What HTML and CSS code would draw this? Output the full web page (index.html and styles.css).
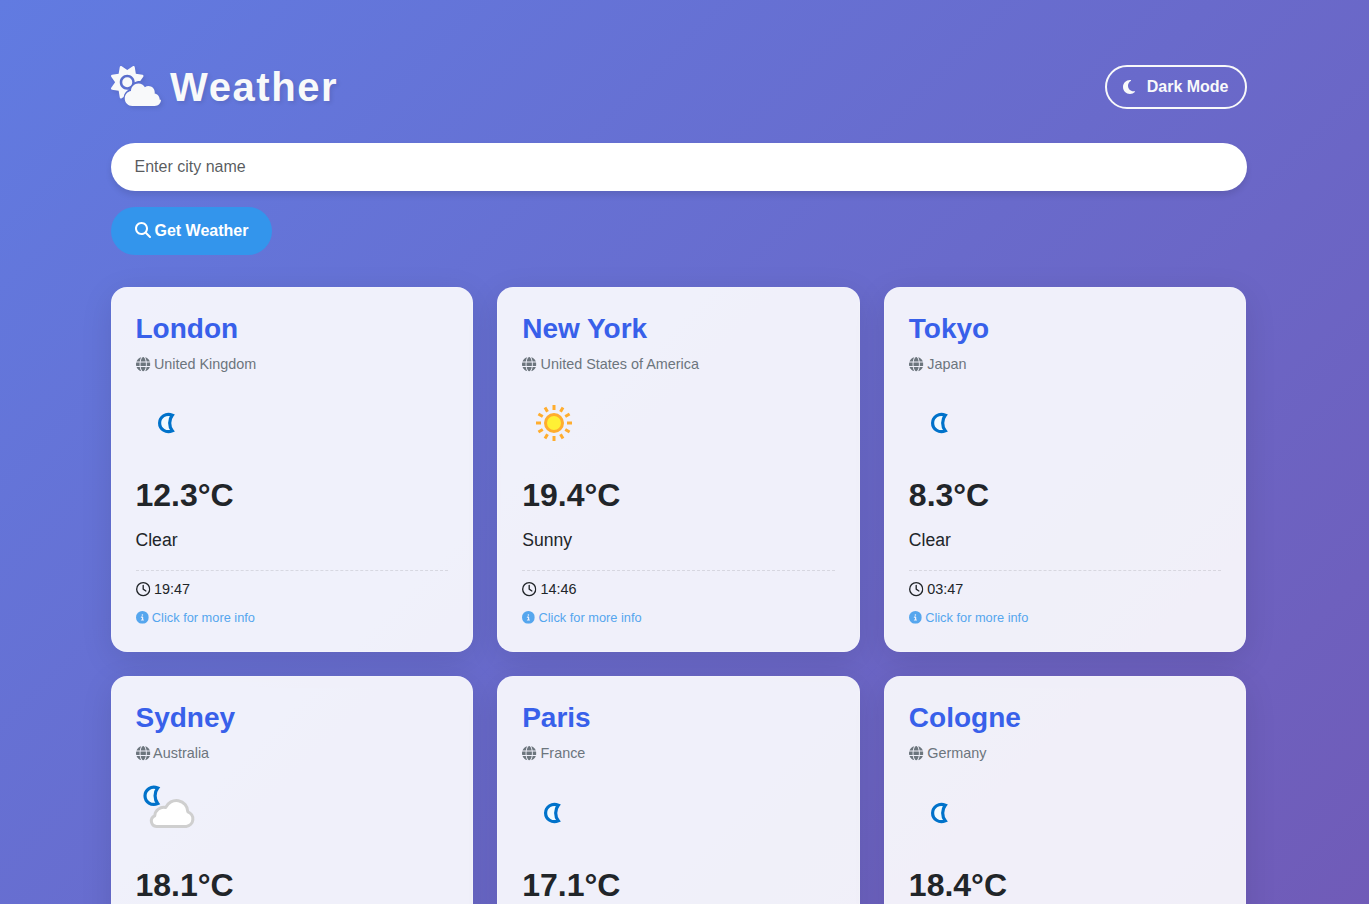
FILE: index.html
```html
<!DOCTYPE html>
<html lang="en">
<head>
<meta charset="utf-8">
<title>Weather</title>
<link rel="stylesheet" href="styles.css">
</head>
<body>
<svg class="sprite" aria-hidden="true">
  <symbol id="cloud-sun" viewBox="0 0 640 512"><path d="M294.2 1.2c5.1 2.1 8.7 6.7 9.6 12.1l14.1 84.7 84.7 14.1c5.4 .9 10 4.5 12.1 9.6s1.5 10.9-1.6 15.4l-38.5 55c-2.2-.1-4.4-.2-6.7-.2c-23.3 0-45.1 6.2-64 17.1l0-1.1c0-53-43-96-96-96s-96 43-96 96s43 96 96 96c8.1 0 15.9-1 23.4-2.9c-36.6 18.1-63.3 53.1-69.8 94.9l-24.4 17c-4.5 3.2-10.3 3.8-15.4 1.6s-8.7-6.7-9.6-12.1L98.1 317.9 13.4 303.8c-5.4-.9-10-4.5-12.1-9.6s-1.5-10.9 1.6-15.4L52.5 208 2.9 137.2c-3.2-4.5-3.8-10.3-1.6-15.4s6.7-8.7 12.1-9.6L98.1 98.1l14.1-84.7c.9-5.4 4.5-10 9.6-12.1s10.9-1.5 15.4 1.6L208 52.5 278.8 2.9c4.5-3.2 10.3-3.8 15.4-1.6zM144 208a64 64 0 1 1 128 0 64 64 0 1 1 -128 0zM639.9 431.9c0 44.2-35.8 80-80 80H271.9c-53 0-96-43-96-96c0-47.6 34.6-87 80-94.6v-1.3c0-53 43-96 96-96c34.9 0 65.4 18.6 82.2 46.4c13-9.1 28.8-14.4 45.8-14.4c44.2 0 80 35.8 80 80c0 5.9-.6 11.7-1.9 17.2c37.4 6.7 65.8 39.4 65.8 78.7z"/></symbol>
  <symbol id="moon" viewBox="0 0 384 512"><path d="M223.5 32C100 32 0 132.3 0 256S100 480 223.5 480c60.6 0 115.5-24.2 155.8-63.4c5-4.9 6.3-12.5 3.1-18.7s-10.1-9.7-17-8.5c-9.8 1.7-19.8 2.6-30.1 2.6c-96.9 0-175.5-78.8-175.5-176c0-65.8 36-123.1 89.3-153.3c6.1-3.5 9.2-10.5 7.7-17.3s-7.3-11.9-14.3-12.5c-6.3-.5-12.6-.8-19-.8z"/></symbol>
  <symbol id="search" viewBox="0 0 512 512"><path d="M416 208c0 45.9-14.9 88.3-40 122.7L502.6 457.4c12.5 12.5 12.5 32.8 0 45.3s-32.8 12.5-45.3 0L330.7 376c-34.4 25.2-76.8 40-122.7 40C93.1 416 0 322.9 0 208S93.1 0 208 0S416 93.1 416 208zM208 352a144 144 0 1 0 0-288 144 144 0 1 0 0 288z"/></symbol>
  <symbol id="globe" viewBox="0 0 512 512"><path d="M352 256c0 22.2-1.2 43.6-3.3 64H163.3c-2.2-20.4-3.3-41.8-3.3-64s1.2-43.6 3.3-64H348.7c2.2 20.4 3.3 41.8 3.3 64zm28.8-64H503.9c5.3 20.5 8.1 41.9 8.1 64s-2.8 43.5-8.1 64H380.8c2.1-20.6 3.2-42 3.2-64s-1.1-43.4-3.2-64zm112.6-32H376.7c-10-63.9-29.8-117.4-55.3-151.6c78.3 20.7 142 77.5 171.9 151.6zm-149.1 0H167.7c6.1-36.4 15.5-68.6 27-94.7c10.5-23.6 22.2-40.7 33.5-51.5C239.4 3.2 248.7 0 256 0s16.6 3.2 27.8 13.8c11.3 10.8 23 27.9 33.5 51.5c11.6 26 20.9 58.2 27 94.7zm-209 0H18.6C48.6 85.9 112.2 29.1 190.6 8.4C165.1 42.6 145.3 96.1 135.3 160zM8.1 192H131.2c-2.1 20.6-3.2 42-3.2 64s1.1 43.4 3.2 64H8.1C2.8 299.5 0 278.1 0 256s2.8-43.5 8.1-64zM194.7 446.6c-11.6-26-20.9-58.2-27-94.6H344.3c-6.1 36.4-15.5 68.6-27 94.6c-10.5 23.6-22.2 40.7-33.5 51.5C272.6 508.8 263.3 512 256 512s-16.6-3.2-27.8-13.8c-11.3-10.8-23-27.9-33.5-51.5zM135.3 352c10 63.9 29.8 117.4 55.3 151.6C112.2 482.9 48.6 426.1 18.6 352H135.3zm358.1 0c-30 74.1-93.6 130.9-171.9 151.6c25.5-34.2 45.2-87.7 55.3-151.6H493.4z"/></symbol>
  <symbol id="clock" viewBox="0 0 512 512"><path d="M464 256A208 208 0 1 1 48 256a208 208 0 1 1 416 0zM0 256a256 256 0 1 0 512 0A256 256 0 1 0 0 256zM232 120V256c0 8 4 15.5 10.7 20l96 64c11 7.4 25.9 4.4 33.3-6.7s4.4-25.9-6.7-33.3L280 243.2V120c0-13.3-10.7-24-24-24s-24 10.7-24 24z"/></symbol>
  <symbol id="info" viewBox="0 0 512 512"><path d="M256 512A256 256 0 1 0 256 0a256 256 0 1 0 0 512zM216 336h24V272H216c-13.3 0-24-10.7-24-24s10.7-24 24-24h48c13.3 0 24 10.7 24 24v88h8c13.3 0 24 10.7 24 24s-10.7 24-24 24H216c-13.3 0-24-10.7-24-24s10.7-24 24-24zm40-208a32 32 0 1 1 0 64 32 32 0 1 1 0-64z"/></symbol>
  <symbol id="night-clear" viewBox="0 0 64 64">
    <path id="crescent" d="M36.300 24.200C30 21.500 23.600 25.800 23.600 32S30 42.500 36.300 39.800C32.800 35.500 32.800 28.500 36.300 24.200Z" fill="#f2fbff" stroke="#0072ca" stroke-width="3.200"/>
  </symbol>
  <symbol id="day-sunny" viewBox="0 0 64 64">
    <g stroke="#ffad2e" stroke-width="3">
      <path id="ray" d="M32 14v5M32 45v5"/>
      <use href="#ray" transform="rotate(30 32 32)"/><use href="#ray" transform="rotate(60 32 32)"/><use href="#ray" transform="rotate(90 32 32)"/><use href="#ray" transform="rotate(120 32 32)"/><use href="#ray" transform="rotate(150 32 32)"/>
      <circle cx="32" cy="32" r="8.5" fill="#fff035"/>
    </g>
  </symbol>
  <symbol id="night-cloudy" viewBox="0 0 64 64">
    <use href="#crescent" transform="translate(-14.6 -17.200)"/>
    <path d="M20.400 45.500A5.600 5.600 0 0 1 18.700 34.800A9.100 9.100 0 0 1 29.700 26.500A11.500 11.500 0 0 1 51.800 30.800A7.600 7.600 0 0 1 50.300 45.500Z" fill="#fff" stroke="#cfcfcf" stroke-width="3" stroke-linejoin="round"/>
  </symbol>
</svg>
<main class="container">
  <header class="header">
    <h1 class="title"><svg class="title-icon"><use href="#cloud-sun"/></svg>Weather</h1>
    <button class="theme-toggle"><svg class="icon icon-moon"><use href="#moon"/></svg> Dark Mode</button>
  </header>
  <form class="search">
    <input class="city-input" type="text" placeholder="Enter city name">
    <button class="search-button" type="button"><svg class="icon"><use href="#search"/></svg> Get Weather</button>
  </form>
  <section class="cards">
    <article class="card">
      <h2 class="city">London</h2>
      <p class="country"><svg class="icon"><use href="#globe"/></svg> United Kingdom</p>
      <svg class="weather-icon"><use href="#night-clear"/></svg>
      <p class="temperature">12.3°C</p>
      <p class="condition">Clear</p>
      <p class="time"><svg class="icon"><use href="#clock"/></svg> 19:47</p>
      <p class="more"><svg class="icon"><use href="#info"/></svg> Click for more info</p>
    </article>
    <article class="card">
      <h2 class="city">New York</h2>
      <p class="country"><svg class="icon"><use href="#globe"/></svg> United States of America</p>
      <svg class="weather-icon"><use href="#day-sunny"/></svg>
      <p class="temperature">19.4°C</p>
      <p class="condition">Sunny</p>
      <p class="time"><svg class="icon"><use href="#clock"/></svg> 14:46</p>
      <p class="more"><svg class="icon"><use href="#info"/></svg> Click for more info</p>
    </article>
    <article class="card">
      <h2 class="city">Tokyo</h2>
      <p class="country"><svg class="icon"><use href="#globe"/></svg> Japan</p>
      <svg class="weather-icon"><use href="#night-clear"/></svg>
      <p class="temperature">8.3°C</p>
      <p class="condition">Clear</p>
      <p class="time"><svg class="icon"><use href="#clock"/></svg> 03:47</p>
      <p class="more"><svg class="icon"><use href="#info"/></svg> Click for more info</p>
    </article>
    <article class="card">
      <h2 class="city">Sydney</h2>
      <p class="country"><svg class="icon"><use href="#globe"/></svg> Australia</p>
      <svg class="weather-icon"><use href="#night-cloudy"/></svg>
      <p class="temperature">18.1°C</p>
    </article>
    <article class="card">
      <h2 class="city">Paris</h2>
      <p class="country"><svg class="icon"><use href="#globe"/></svg> France</p>
      <svg class="weather-icon"><use href="#night-clear"/></svg>
      <p class="temperature">17.1°C</p>
    </article>
    <article class="card">
      <h2 class="city">Cologne</h2>
      <p class="country"><svg class="icon"><use href="#globe"/></svg> Germany</p>
      <svg class="weather-icon"><use href="#night-clear"/></svg>
      <p class="temperature">18.4°C</p>
    </article>
  </section>
</main>
</body>
</html>
```

FILE: styles.css
```css
*, *::before, *::after { box-sizing: border-box; }

html, body { height: 100%; }

body {
  margin: 0;
  overflow: hidden;
  padding-right: 12px;
  font-family: "Liberation Sans", Arial, sans-serif;
  font-size: 16px;
  line-height: 1.5;
  color: #212529;
  background: linear-gradient(135deg, #617be1 0%, #764fa8 100%) 0 0 / 100% 1780px no-repeat;
}

h1, h2, p { margin: 0; }

.sprite { display: block; width: 0; height: 0; }

.icon {
  width: 1em;
  height: 1em;
  vertical-align: -0.125em;
  fill: currentColor;
  overflow: visible;
}

.container {
  width: 1136px;
  margin: 0 auto;
  padding-top: 63px;
}

.header {
  display: flex;
  justify-content: space-between;
  align-items: center;
  height: 48px;
  margin-bottom: 32px;
}

.title {
  display: flex;
  align-items: center;
  gap: 9.5px;
  font-size: 40px;
  line-height: 48px;
  letter-spacing: 1.6px;
  color: #f8f9fa;
  text-shadow: 2px 2px 4px rgba(0, 0, 0, 0.1);
}

.title-icon {
  width: 50px;
  height: 40px;
  margin-top: -2px;
  fill: currentColor;
  filter: drop-shadow(2px 2px 2px rgba(0, 0, 0, 0.1));
}

.theme-toggle {
  height: 44px;
  padding: 0 16px 0 15.5px;
  border: 2px solid #f8f9fa;
  border-radius: 50px;
  background: transparent;
  font: bold 16px/24px "Liberation Sans", Arial, sans-serif;
  color: #f8f9fa;
}

.icon-moon { width: 12px; margin-right: 7.5px; vertical-align: -3px; }

.search {
  display: flex;
  flex-direction: column;
  align-items: flex-start;
  gap: 16px;
  margin-bottom: 32px;
}

.city-input {
  width: 100%;
  height: 48px;
  padding: 0 24px;
  border: 0;
  border-radius: 50px;
  background: #fff;
  font: 16px "Liberation Sans", Arial, sans-serif;
  box-shadow: 0 4px 6px rgba(0, 0, 0, 0.1);
}

.city-input::placeholder { color: rgba(33, 37, 41, 0.75); }

.search-button {
  height: 48px;
  padding: 0 24px;
  border: 0;
  border-radius: 50px;
  background: #3395ec;
  font: bold 16px/24px "Liberation Sans", Arial, sans-serif;
  color: #fff;
}

.search-button .icon { margin-right: -0.5px; }

.cards {
  display: grid;
  grid-template-columns: repeat(3, 1fr);
  gap: 24px;
}

.card {
  height: 365.4px;
  padding: 24px;
  border: 1px solid rgba(255, 255, 255, 0.2);
  border-radius: 16px;
  background: rgba(255, 255, 255, 0.9);
  box-shadow: 0 8px 32px rgba(0, 0, 0, 0.1);
}

.city {
  margin-bottom: 8px;
  font-size: 28px;
  line-height: 1.2;
  color: #3860ea;
}

.country {
  margin-bottom: 16px;
  font-size: 14.4px;
  color: #6c757d;
}

.country .icon,
.time .icon {
  vertical-align: -2.5px;
}

.weather-icon {
  display: block;
  width: 64px;
  height: 64px;
  margin-bottom: 16px;
}

.temperature {
  margin-bottom: 8px;
  font-size: 32px;
  font-weight: bold;
}

.condition {
  margin-bottom: 16px;
  font-size: 17.6px;
}

.time {
  padding-top: 8px;
  margin-bottom: 8px;
  border-top: 1px dashed rgba(0, 0, 0, 0.1);
  font-size: 14.4px;
}

.more {
  font-size: 12.8px;
  color: #55a6ee;
}
```
